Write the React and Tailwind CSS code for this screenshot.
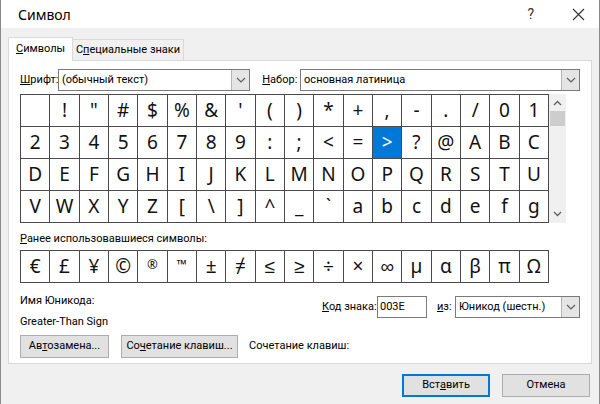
import React from "react";

const rows = [
  [" ", "!", "\"", "#", "$", "%", "&", "'", "(", ")", "*", "+", ",", "-", ".", "/", "0", "1"],
  ["2", "3", "4", "5", "6", "7", "8", "9", ":", ";", "<", "=", ">", "?", "@", "A", "B", "C"],
  ["D", "E", "F", "G", "H", "I", "J", "K", "L", "M", "N", "O", "P", "Q", "R", "S", "T", "U"],
  ["V", "W", "X", "Y", "Z", "[", "\\", "]", "^", "_", "`", "a", "b", "c", "d", "e", "f", "g"],
];

const recent = ["€", "£", "¥", "©", "®", "™", "±", "≠", "≤", "≥", "÷", "×", "∞", "µ", "α", "β", "π", "Ω"];

const Chevron = () => (
  <svg width="10" height="6" viewBox="0 0 10 6">
    <path d="M1 1 L5 5 L9 1" fill="none" stroke="#606060" strokeWidth="1.2" />
  </svg>
);

const Select = ({ value, className }) => (
  <div className={`flex h-[22px] items-stretch border border-[#7a7a7a] bg-white ${className}`}>
    <span className="flex-1 whitespace-nowrap pl-[3px] leading-[20px]">{value}</span>
    <span className="flex w-[18px] items-center justify-center border-l border-[#b4b4b4] bg-[#e5e5e5]">
      <Chevron />
    </span>
  </div>
);

const Btn = ({ children, className = "" }) => (
  <button className={`h-[23px] whitespace-nowrap border border-[#adadad] bg-[#e1e1e1] text-[11px] text-black ${className}`}>
    {children}
  </button>
);

export default function App() {
  return (
    <div
      className="flex h-[404px] w-[600px] flex-col whitespace-nowrap border-x border-[#8a8a8a] bg-[#f0f0f0] text-[11px] text-black"
      style={{ fontFamily: 'Roboto, "Noto Sans", sans-serif' }}
    >
      {/* title bar */}
      <div className="flex h-[28px] items-center bg-white pl-[17px] pr-[14px]">
        <span className="flex-1 text-[14px]" style={{ fontFamily: '"Noto Sans", sans-serif' }}>Символ</span>
        <span className="mr-[38px] text-[14px] text-[#333]">?</span>
        <svg width="13" height="13" viewBox="0 0 13 13">
          <path d="M1 1 L12 12 M12 1 L1 12" stroke="#333" strokeWidth="1.1" />
        </svg>
      </div>

      {/* tabs */}
      <div className="flex h-[32px] items-end pl-[7px]">
        <div className="relative z-10 -mb-px flex h-[24px] w-[65px] items-center justify-center border border-b-0 border-[#d9d9d9] bg-white">
          <span><u>С</u>имволы</span>
        </div>
        <div className="flex h-[21px] w-[111px] items-center justify-center border border-b-0 border-l-0 border-[#d9d9d9] bg-[#f0f0f0]">
          <span>С<u>п</u>ециальные знаки</span>
        </div>
      </div>

      {/* panel */}
      <div className="mx-[7px] flex h-[304px] flex-col border border-[#d9d9d9] bg-white px-[11px] pt-[8px]">
        <div className="flex items-center">
          <span className="w-[38px]"><u>Ш</u>рифт:</span>
          <Select value="(обычный текст)" className="w-[193px]" />
          <span className="ml-[12px] w-[38px]"><u>Н</u>абор:</span>
          <Select value="основная латиница" className="w-[281px]" />
        </div>

        <div className="mt-[3px] flex">
          <div className="grid w-[529px] grid-cols-18 gap-px border border-[#4a4a4a] bg-[#4a4a4a]">
            {rows.flat().map((c, i) => (
              <div
                key={i}
                className={`flex h-[31px] items-center justify-center text-[19px] ${
                  c === ">" ? "bg-[#0078d7] text-white" : "bg-white text-[#111]"
                }`}
                style={{ fontFamily: '"Noto Sans", sans-serif' }}
              >
                {c}
              </div>
            ))}
          </div>
          <div className="flex w-[17px] flex-col items-center bg-[#f0f0f0]">
            <svg width="9" height="6" viewBox="0 0 9 6" className="mt-[6px]">
              <path d="M1 5 L4.5 1.5 L8 5" fill="none" stroke="#606060" strokeWidth="1.3" />
            </svg>
            <div className="mt-[5px] h-[15px] w-[15px] bg-[#cdcdcd]" />
            <div className="flex-1" />
            <svg width="9" height="6" viewBox="0 0 9 6" className="mb-[6px]">
              <path d="M1 1 L4.5 4.5 L8 1" fill="none" stroke="#606060" strokeWidth="1.3" />
            </svg>
          </div>
        </div>

        <div className="mt-[8px]"><u>Р</u>анее использовавшиеся символы:</div>
        <div className="mt-[2px] grid w-[529px] grid-cols-18 gap-px border border-[#4a4a4a] bg-[#4a4a4a]">
          {recent.map((c, i) => (
            <div
              key={i}
              className={`flex h-[31px] justify-center bg-white text-[#111] ${
                c === "®" || c === "™" ? "items-start pt-[4px] text-[13px]" : "items-center text-[19px]"
              }`}
              style={{ fontFamily: '"Noto Sans", sans-serif' }}
            >
              {c}
            </div>
          ))}
        </div>

        <div className="mt-[7px] flex">
          <div className="flex w-[302px] flex-col">
            <span className="mt-[3px]">Имя Юникода:</span>
            <span className="mt-[5px]">Greater-Than Sign</span>
          </div>
          <div className="mt-[6px] flex items-start">
            <span className="mt-[3px] w-[55px]"><u>К</u>од знака:</span>
            <div className="h-[22px] w-[50px] border border-[#7a7a7a] bg-white pl-[2px] leading-[20px]">003E</div>
            <span className="ml-[10px] mt-[3px] w-[18px]"><u>и</u>з:</span>
            <Select value="Юникод (шестн.)" className="w-[125px]" />
          </div>
        </div>

        <div className="mt-[4px] flex items-center">
          <Btn className="w-[89px]">Ав<u>т</u>озамена...</Btn>
          <Btn className="ml-[12px] w-[117px]">Со<u>ч</u>етание клавиш...</Btn>
          <span className="ml-[11px]">Сочетание клавиш:</span>
        </div>
      </div>

      {/* footer buttons */}
      <div className="mt-[10px] flex justify-end pr-[9px]">
        <button className="h-[23px] w-[88px] border-2 border-[#0078d7] bg-[#e1e1e1] text-[11px]">
          Вст<u>а</u>вить
        </button>
        <button className="ml-[12px] h-[23px] w-[88px] border border-[#adadad] bg-[#e1e1e1] text-[11px]">
          Отмена
        </button>
      </div>
    </div>
  );
}
